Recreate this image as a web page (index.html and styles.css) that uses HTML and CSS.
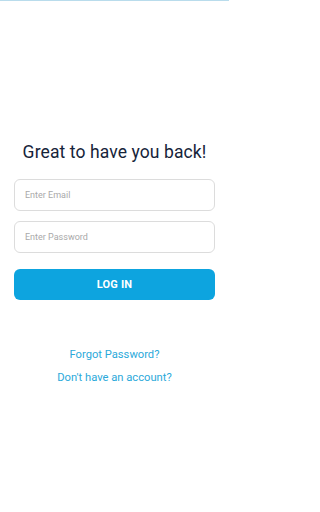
FILE: index.html
```html
<!DOCTYPE html>
<html>
<head>
<meta charset="utf-8">
<link rel="stylesheet" href="styles.css">
</head>
<body>
<div class="topline"></div>
<main class="page">
  <h1 class="title">Great to have you back!</h1>
  <form class="form">
    <input class="field" type="email" placeholder="Enter Email">
    <input class="field" type="password" placeholder="Enter Password">
    <button class="btn" type="button">LOG IN</button>
  </form>
  <div class="links">
    <a class="link" href="#">Forgot Password?</a>
    <a class="link" href="#">Don't have an account?</a>
  </div>
</main>
</body>
</html>
```
FILE: styles.css
```css
* { box-sizing: border-box; }
html, body { margin: 0; padding: 0; background: #fff; }
body { font-family: Roboto, "Noto Sans", sans-serif; width: 229px; min-height: 512px; overflow: hidden; }
.topline { height: 1px; background: #b9dcec; }
.page { padding: 0 14px; display: flex; flex-direction: column; }
.title { margin: 139px 0 0; font-size: 17.5px; font-weight: 400; color: #16243a; text-align: center; line-height: 24px; letter-spacing: 0.1px; }
.form { display: flex; flex-direction: column; gap: 10px; margin-top: 15px; }
.field { height: 32px; width: 100%; border: 1px solid #dcdcdc; border-radius: 6px; padding: 0 10px; font-family: Roboto, sans-serif; font-size: 9px; color: #333; outline: none; background: #fff; }
.field::placeholder { color: #a9a9a9; }
.btn { margin-top: 6px; height: 31px; border: 0; border-radius: 6px; background: #0da4df; color: #fff; font-family: Roboto, sans-serif; font-weight: 700; font-size: 11px; letter-spacing: 0.2px; }
.links { display: flex; flex-direction: column; align-items: center; gap: 9px; margin-top: 48px; }
.link { color: #2ba9da; text-decoration: none; font-size: 11.2px; line-height: 14px; }
```
